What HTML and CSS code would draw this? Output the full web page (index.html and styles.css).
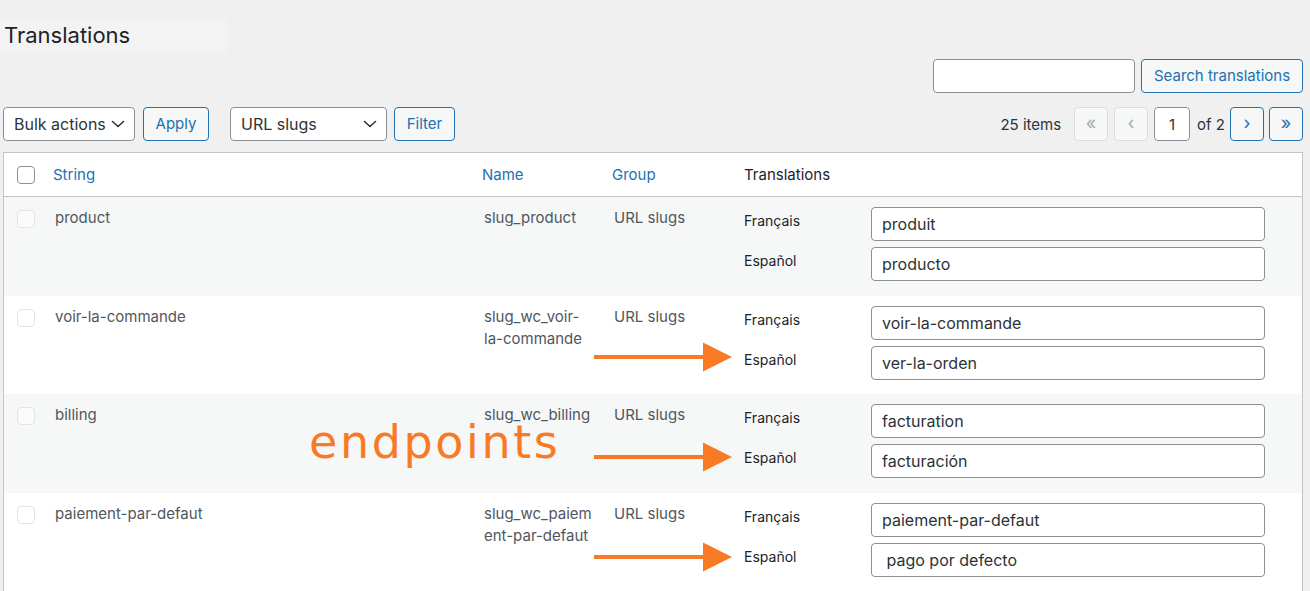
FILE: index.html
```html
<!DOCTYPE html>
<html lang="en">
<head>
<meta charset="utf-8">
<title>Translations</title>
<link rel="stylesheet" href="styles.css">
</head>
<body>
<div class="wrap">
  <div class="title-box"><h1 class="title">Translations</h1></div>

  <div class="search-box">
    <input class="search-input" type="search" aria-label="Search translations">
    <button class="btn search-btn" type="button">Search translations</button>
  </div>

  <div class="tablenav">
    <div class="actions">
      <div class="select bulk-select">
        <span>Bulk actions</span>
        <svg class="chev" width="14" height="8" viewBox="0 0 14 8"><path d="M1.5 1.5 L7 6.5 L12.5 1.5" fill="none" stroke="#2c3338" stroke-width="1.6" stroke-linecap="round" stroke-linejoin="round"/></svg>
      </div>
      <button class="btn apply-btn" type="button">Apply</button>
      <div class="select group-select">
        <span>URL slugs</span>
        <svg class="chev" width="14" height="8" viewBox="0 0 14 8"><path d="M1.5 1.5 L7 6.5 L12.5 1.5" fill="none" stroke="#2c3338" stroke-width="1.6" stroke-linecap="round" stroke-linejoin="round"/></svg>
      </div>
      <button class="btn filter-btn" type="button">Filter</button>
    </div>
    <div class="pages">
      <span class="count">25 items</span>
      <span class="pbtn disabled first">«</span>
      <span class="pbtn disabled prev">‹</span>
      <input class="page-input" type="text" value="1" aria-label="Current page">
      <span class="of">of 2</span>
      <span class="pbtn next">›</span>
      <span class="pbtn last">»</span>
    </div>
  </div>

  <table class="list">
    <colgroup>
      <col class="c-cb"><col class="c-str"><col class="c-name"><col class="c-group"><col class="c-tr">
    </colgroup>
    <thead>
      <tr>
        <th class="cb-cell"><span class="cb"></span></th>
        <th class="th-str"><a class="sort">String</a></th>
        <th class="th-name"><a class="sort">Name</a></th>
        <th class="th-group"><a class="sort">Group</a></th>
        <th class="th-tr">Translations</th>
      </tr>
    </thead>
    <tbody>
      <tr>
        <td class="cb-cell"><span class="cb faint"></span></td>
        <td class="txt">product</td>
        <td class="txt name">slug_product</td>
        <td class="txt">URL slugs</td>
        <td class="tr-cell">
          <div class="tr-grid">
            <span class="lang">Français</span><input class="tr-input" type="text" value="produit">
            <span class="lang">Español</span><input class="tr-input" type="text" value="producto">
          </div>
        </td>
      </tr>
      <tr>
        <td class="cb-cell"><span class="cb faint"></span></td>
        <td class="txt">voir-la-commande</td>
        <td class="txt name">slug_wc_voir-la-commande</td>
        <td class="txt">URL slugs</td>
        <td class="tr-cell">
          <div class="tr-grid">
            <span class="lang">Français</span><input class="tr-input" type="text" value="voir-la-commande">
            <span class="lang">Español</span><input class="tr-input" type="text" value="ver-la-orden">
          </div>
        </td>
      </tr>
      <tr>
        <td class="cb-cell"><span class="cb faint"></span></td>
        <td class="txt">billing</td>
        <td class="txt name">slug_wc_billing</td>
        <td class="txt">URL slugs</td>
        <td class="tr-cell">
          <div class="tr-grid">
            <span class="lang">Français</span><input class="tr-input" type="text" value="facturation">
            <span class="lang">Español</span><input class="tr-input" type="text" value="facturación">
          </div>
        </td>
      </tr>
      <tr>
        <td class="cb-cell"><span class="cb faint"></span></td>
        <td class="txt">paiement-par-defaut</td>
        <td class="txt name">slug_wc_paiement-par-defaut</td>
        <td class="txt">URL slugs</td>
        <td class="tr-cell">
          <div class="tr-grid">
            <span class="lang">Français</span><input class="tr-input" type="text" value="paiement-par-defaut">
            <span class="lang">Español</span><input class="tr-input" type="text" value=" pago por defecto">
          </div>
        </td>
      </tr>
    </tbody>
  </table>

  <div class="endpoints">endpoints</div>
  <svg class="arrow arrow-1" width="138" height="30" viewBox="0 0 138 30"><rect x="0" y="13" width="112" height="4" fill="#f87a24"/><polygon points="109,0.5 138,15 109,29.5" fill="#f87a24"/></svg>
  <svg class="arrow arrow-2" width="138" height="30" viewBox="0 0 138 30"><rect x="0" y="13" width="112" height="4" fill="#f87a24"/><polygon points="109,0.5 138,15 109,29.5" fill="#f87a24"/></svg>
  <svg class="arrow arrow-3" width="138" height="30" viewBox="0 0 138 30"><rect x="0" y="13" width="112" height="4" fill="#f87a24"/><polygon points="109,0.5 138,15 109,29.5" fill="#f87a24"/></svg>
</div>
</body>
</html>
```
FILE: styles.css
```css
* { box-sizing: border-box; }

html, body {
  margin: 0;
  padding: 0;
  background: #f0f0f1;
  overflow: hidden;
}

body {
  font-family: Inter, "Liberation Sans", Arial, sans-serif;
  font-size: 15px;
  color: #2c3338;
}

.wrap {
  position: relative;
  margin-left: 3px;
  width: 1300px;
  padding-top: 20px;
}

/* Title */
.title-box {
  margin-left: -3px;
  width: 227px;
  height: 32px;
  background: #f3f3f4;
}
.title {
  margin: 0;
  padding-left: 4px;
  font-size: 22px;
  font-weight: 400;
  line-height: 30px;
  color: #1d2327;
}

/* Search */
.search-box {
  margin-top: 7px;
  display: flex;
  justify-content: flex-end;
  gap: 6px;
  height: 34px;
}
.search-input {
  width: 202px;
  height: 34px;
  border: 1px solid #8c8f94;
  border-radius: 4px;
  background: #fff;
  padding: 0 8px;
  font: inherit;
}

.btn {
  height: 34px;
  padding: 0 12px;
  border: 1px solid #2271b1;
  border-radius: 4px;
  background: #f6f7f7;
  color: #2271b1;
  font-family: inherit;
  font-size: 15px;
  line-height: 32px;
  white-space: nowrap;
}
.search-btn { width: 162px; padding: 0; }

/* Tablenav */
.tablenav {
  margin-top: 14px;
  height: 34px;
  display: flex;
  justify-content: space-between;
  align-items: center;
}
.actions {
  display: flex;
  align-items: center;
}
.select {
  height: 34px;
  border: 1px solid #8c8f94;
  border-radius: 4px;
  background: #fff;
  display: flex;
  align-items: center;
  justify-content: space-between;
  padding: 0 9px 0 10px;
  font-size: 16px;
  color: #2c3338;
}
.bulk-select { width: 132px; }
.group-select { width: 157px; margin-left: 21px; }
.chev { display: block; }
.apply-btn { width: 66px; padding: 0; margin-left: 8px; }
.filter-btn { width: 61px; padding: 0; margin-left: 7px; }

.pages {
  display: flex;
  align-items: center;
}
.count {
  margin-right: 13px;
  color: #2c3338;
  font-size: 15px;
}
.pbtn {
  width: 34px;
  height: 34px;
  border: 1px solid #2271b1;
  border-radius: 4px;
  background: #f6f7f7;
  color: #2271b1;
  font-size: 18px;
  line-height: 30px;
  text-align: center;
}
.pbtn.prev { margin-left: 6px; }
.pbtn.next { margin-left: 5px; }
.pbtn.last { margin-left: 5px; }
.pbtn.disabled {
  border-color: #dcdcde;
  color: #a7aaad;
}
.page-input {
  width: 36px;
  height: 34px;
  margin-left: 6px;
  border: 1px solid #8c8f94;
  border-radius: 4px;
  background: #fff;
  text-align: center;
  font-family: inherit;
  font-size: 15px;
  color: #2c3338;
  padding: 0;
}
.of {
  margin-left: 7px;
  font-size: 15px;
}

/* Table */
.list {
  margin-top: 11px;
  width: 1300px;
  table-layout: fixed;
  border-collapse: separate;
  border-spacing: 0;
  border: 1px solid #c3c4c7;
  background: #fff;
}
.c-cb { width: 40px; }
.c-str { width: 430px; }
.c-name { width: 130px; }
.c-group { width: 130px; }
.c-tr { width: 568px; }

.list th {
  height: 44px;
  border-bottom: 1px solid #c3c4c7;
  text-align: left;
  font-weight: 400;
  font-size: 15px;
  color: #1d2327;
  padding: 0 0 0 8px;
  vertical-align: middle;
}
.list th.th-str { padding-left: 9px; }
.list th.th-tr { padding-left: 10px; }
.sort { color: #2271b1; text-decoration: none; }

.list th.cb-cell,
.list td.cb-cell { padding: 0 0 0 13px; }
.list td.cb-cell { padding-top: 13px; }

.cb {
  display: block;
  width: 18px;
  height: 18px;
  border: 1px solid #8c8f94;
  border-radius: 4px;
  background: #fff;
}
.cb.faint {
  border-color: #e3e4e6;
  background: rgba(255, 255, 255, 0.55);
}

.list tbody tr:nth-child(odd) { background: #f6f7f7; }

.list td {
  vertical-align: top;
}
.list td.txt {
  padding: 10px 12px 0 10px;
  font-size: 15px;
  line-height: 22px;
  color: #50575e;
}
.list td.txt:nth-child(2) { padding-left: 11px; }
.list td.name { overflow-wrap: anywhere; }

.tr-cell {
  padding: 10px 0 14.67px 10px;
}
.tr-grid {
  display: grid;
  grid-template-columns: 127px 394px;
  row-gap: 6px;
}
.lang {
  padding-top: 3px;
  font-size: 14px;
  line-height: 22px;
  color: #1d2327;
}
.tr-input {
  width: 394px;
  height: 34px;
  border: 1px solid #8c8f94;
  border-radius: 4px;
  background: #fff;
  padding: 0 10px;
  font-family: inherit;
  font-size: 16px;
  color: #2c3338;
}

/* Annotations overlaid on the screenshot */
.endpoints {
  position: absolute;
  left: 306px;
  top: 419px;
  font-family: "DejaVu Sans", sans-serif;
  font-size: 46px;
  line-height: 46px;
  letter-spacing: 2.6px;
  color: #f87a24;
}
.arrow { position: absolute; left: 591px; display: block; }
.arrow-1 { top: 342px; }
.arrow-2 { top: 442px; }
.arrow-3 { top: 542px; }
```
